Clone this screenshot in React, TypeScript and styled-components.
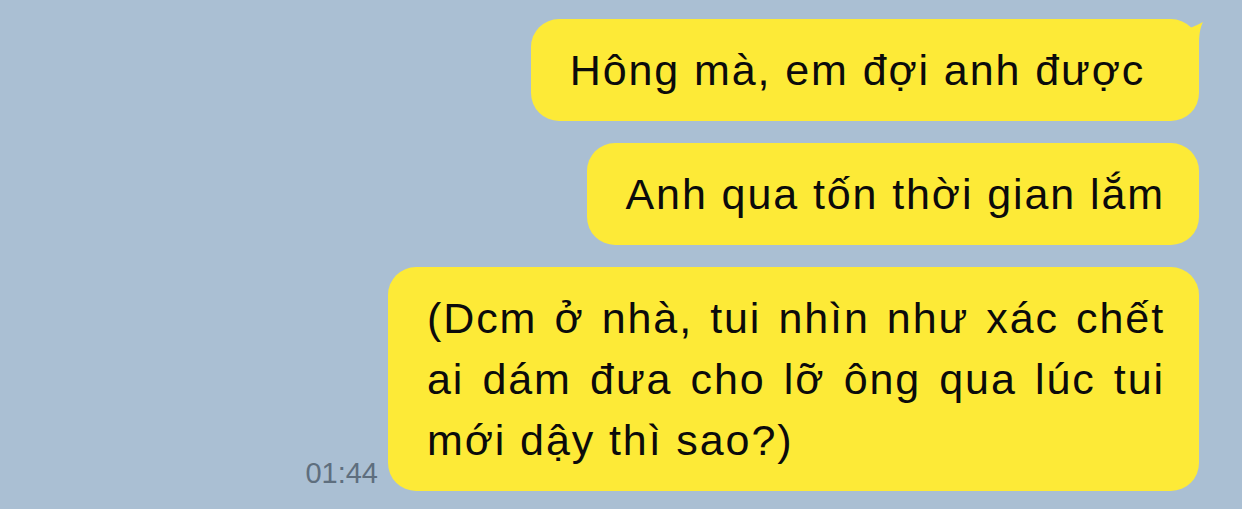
import React from 'react';
import styled, { createGlobalStyle } from 'styled-components';

const GlobalStyle = createGlobalStyle`
  html, body {
    margin: 0;
    padding: 0;
    background: #aabfd3;
  }
`;

const ChatView = styled.div`
  display: flex;
  flex-direction: column;
  align-items: flex-end;
  gap: 22px;
  min-height: 100vh;
  box-sizing: border-box;
  padding: 19px 43px 19px 0;
  background: #aabfd3;
  font-family: 'Liberation Sans', Arial, sans-serif;
`;

const Row = styled.div`
  display: flex;
  align-items: flex-end;
  gap: 10px;
`;

const Time = styled.span`
  font-size: 29px;
  color: #5e6e7e;
  line-height: 1;
  margin-bottom: 3px;
`;

const Bubble = styled.div<{ $width?: number; $padRight?: number }>`
  position: relative;
  box-sizing: border-box;
  width: ${p => (p.$width ? `${p.$width}px` : 'auto')};
  padding: 21px ${p => p.$padRight ?? 34}px 20px 39px;
  background: #fdea37;
  border-radius: 28px;
  color: #0b0b0b;
  font-size: 43px;
  letter-spacing: 1.9px;
  line-height: 61px;
  white-space: nowrap;
`;

const Line = styled.div<{ $justify?: boolean }>`
  text-align: ${p => (p.$justify ? 'justify' : 'left')};
  text-align-last: ${p => (p.$justify ? 'justify' : 'left')};
`;

const TailSvg = styled.svg`
  position: absolute;
  top: 0;
  right: -5px;
`;

const Tail = () => (
  <TailSvg width="24" height="40" viewBox="0 0 24 40">
    <path d="M0 12 C8 10 16 7 23 3 C20 9 19 16 19 26 L19 40 L0 40 Z" fill="#fdea37" />
  </TailSvg>
);

export default function App() {
  return (
    <>
      <GlobalStyle />
      <ChatView>
        <Bubble $padRight={40}>
          <Tail />
          Hông mà, em đợi anh được{'\u00a0'}
        </Bubble>
        <Bubble>Anh qua tốn thời gian lắm</Bubble>
        <Row>
          <Time>01:44</Time>
          <Bubble $width={811}>
            <Line $justify>(Dcm ở nhà, tui nhìn như xác chết</Line>
            <Line $justify>ai dám đưa cho lỡ ông qua lúc tui</Line>
            <Line>mới dậy thì sao?)</Line>
          </Bubble>
        </Row>
      </ChatView>
    </>
  );
}
